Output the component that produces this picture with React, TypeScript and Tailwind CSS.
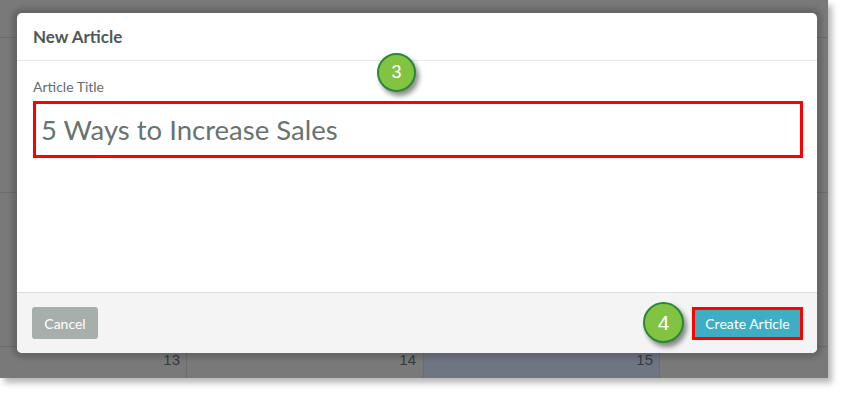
import React from "react";

function Badge({ n, className }: { n: string; className: string }) {
  return (
    <div
      className={
        "absolute rounded-full bg-[#83c342] border-2 border-[#27893c] flex items-center justify-center text-white shadow-[3px_4px_5px_rgba(0,0,0,0.45)] " +
        className
      }
      style={{ fontFamily: "Arial, 'Liberation Sans', sans-serif" }}
    >
      {n}
    </div>
  );
}

export default function App() {
  return (
    <div className="w-[843px] h-[394px] bg-white" style={{ fontFamily: "Lato, 'Open Sans', sans-serif" }}>
      <div className="relative w-[828px] h-[378px] bg-[#797979] shadow-[4px_5px_6px_rgba(0,0,0,0.28)] overflow-hidden">
        {/* page behind overlay */}
        <div className="absolute inset-0 flex flex-col" style={{ fontFamily: "'Liberation Sans', Arial, sans-serif" }}>
          <div className="h-[38px] border-b border-[#6c6c6c]" />
          <div className="h-[155px] border-b border-[#6c6c6c]" />
          <div className="h-[154px] border-b border-[#6c6c6c]" />
          <div className="flex flex-1 text-[15px] text-[#353a40] leading-none pt-[5px]">
            <div className="w-[187px] border-r border-[#6c6c6c] text-right pr-[6px]">13</div>
            <div className="w-[237px] border-r border-[#6c6c6c] text-right pr-[7px]">14</div>
            <div className="w-[236px] border-r border-[#6c6c6c] bg-[#6f7683] text-right pr-[6px] -mt-[5px] pt-[5px]">15</div>
            <div className="flex-1" />
          </div>
        </div>

        {/* modal */}
        <div className="absolute left-[17px] top-[13px] w-[800px] h-[340px] rounded-[5px] bg-white shadow-[0_0_5px_5px_rgba(0,0,0,0.16)] flex flex-col overflow-hidden">
          <div className="h-[48px] shrink-0 border-b border-[#e8e8e8] px-[16px] flex items-center">
            <span className="text-[17px] font-bold text-[#4d5858]">New Article</span>
          </div>
          <div className="flex-1 px-[16px] pt-[18px]">
            <div className="text-[14px] leading-[16px] text-[#666c6c]">Article Title</div>
            <div className="mt-[6px] w-[770px] h-[57px] border-[3px] border-[#ff0000] flex items-center pl-[5px]">
              <span className="text-[27.5px] text-[#687373] leading-none">5 Ways to Increase Sales</span>
            </div>
          </div>
          <div className="h-[61px] shrink-0 border-t border-[#dedede] bg-[#f4f4f4] flex items-center justify-between pl-[15px] pr-[14px]">
            <div className="w-[66px] h-[32px] rounded-[3px] bg-[#a7afad] text-white text-[14px] flex items-center justify-center">
              Cancel
            </div>
            <div className="w-[111px] h-[33px] border-[3px] border-[#ff0000] flex">
              <div className="flex-1 bg-[#3eaec4] text-white text-[14px] flex items-center justify-center">
                Create Article
              </div>
            </div>
          </div>
        </div>

        <Badge n="3" className="left-[377px] top-[53px] w-[39px] h-[39px] text-[18px]" />
        <Badge n="4" className="left-[643px] top-[302px] w-[41px] h-[41px] text-[21px]" />
      </div>
    </div>
  );
}
